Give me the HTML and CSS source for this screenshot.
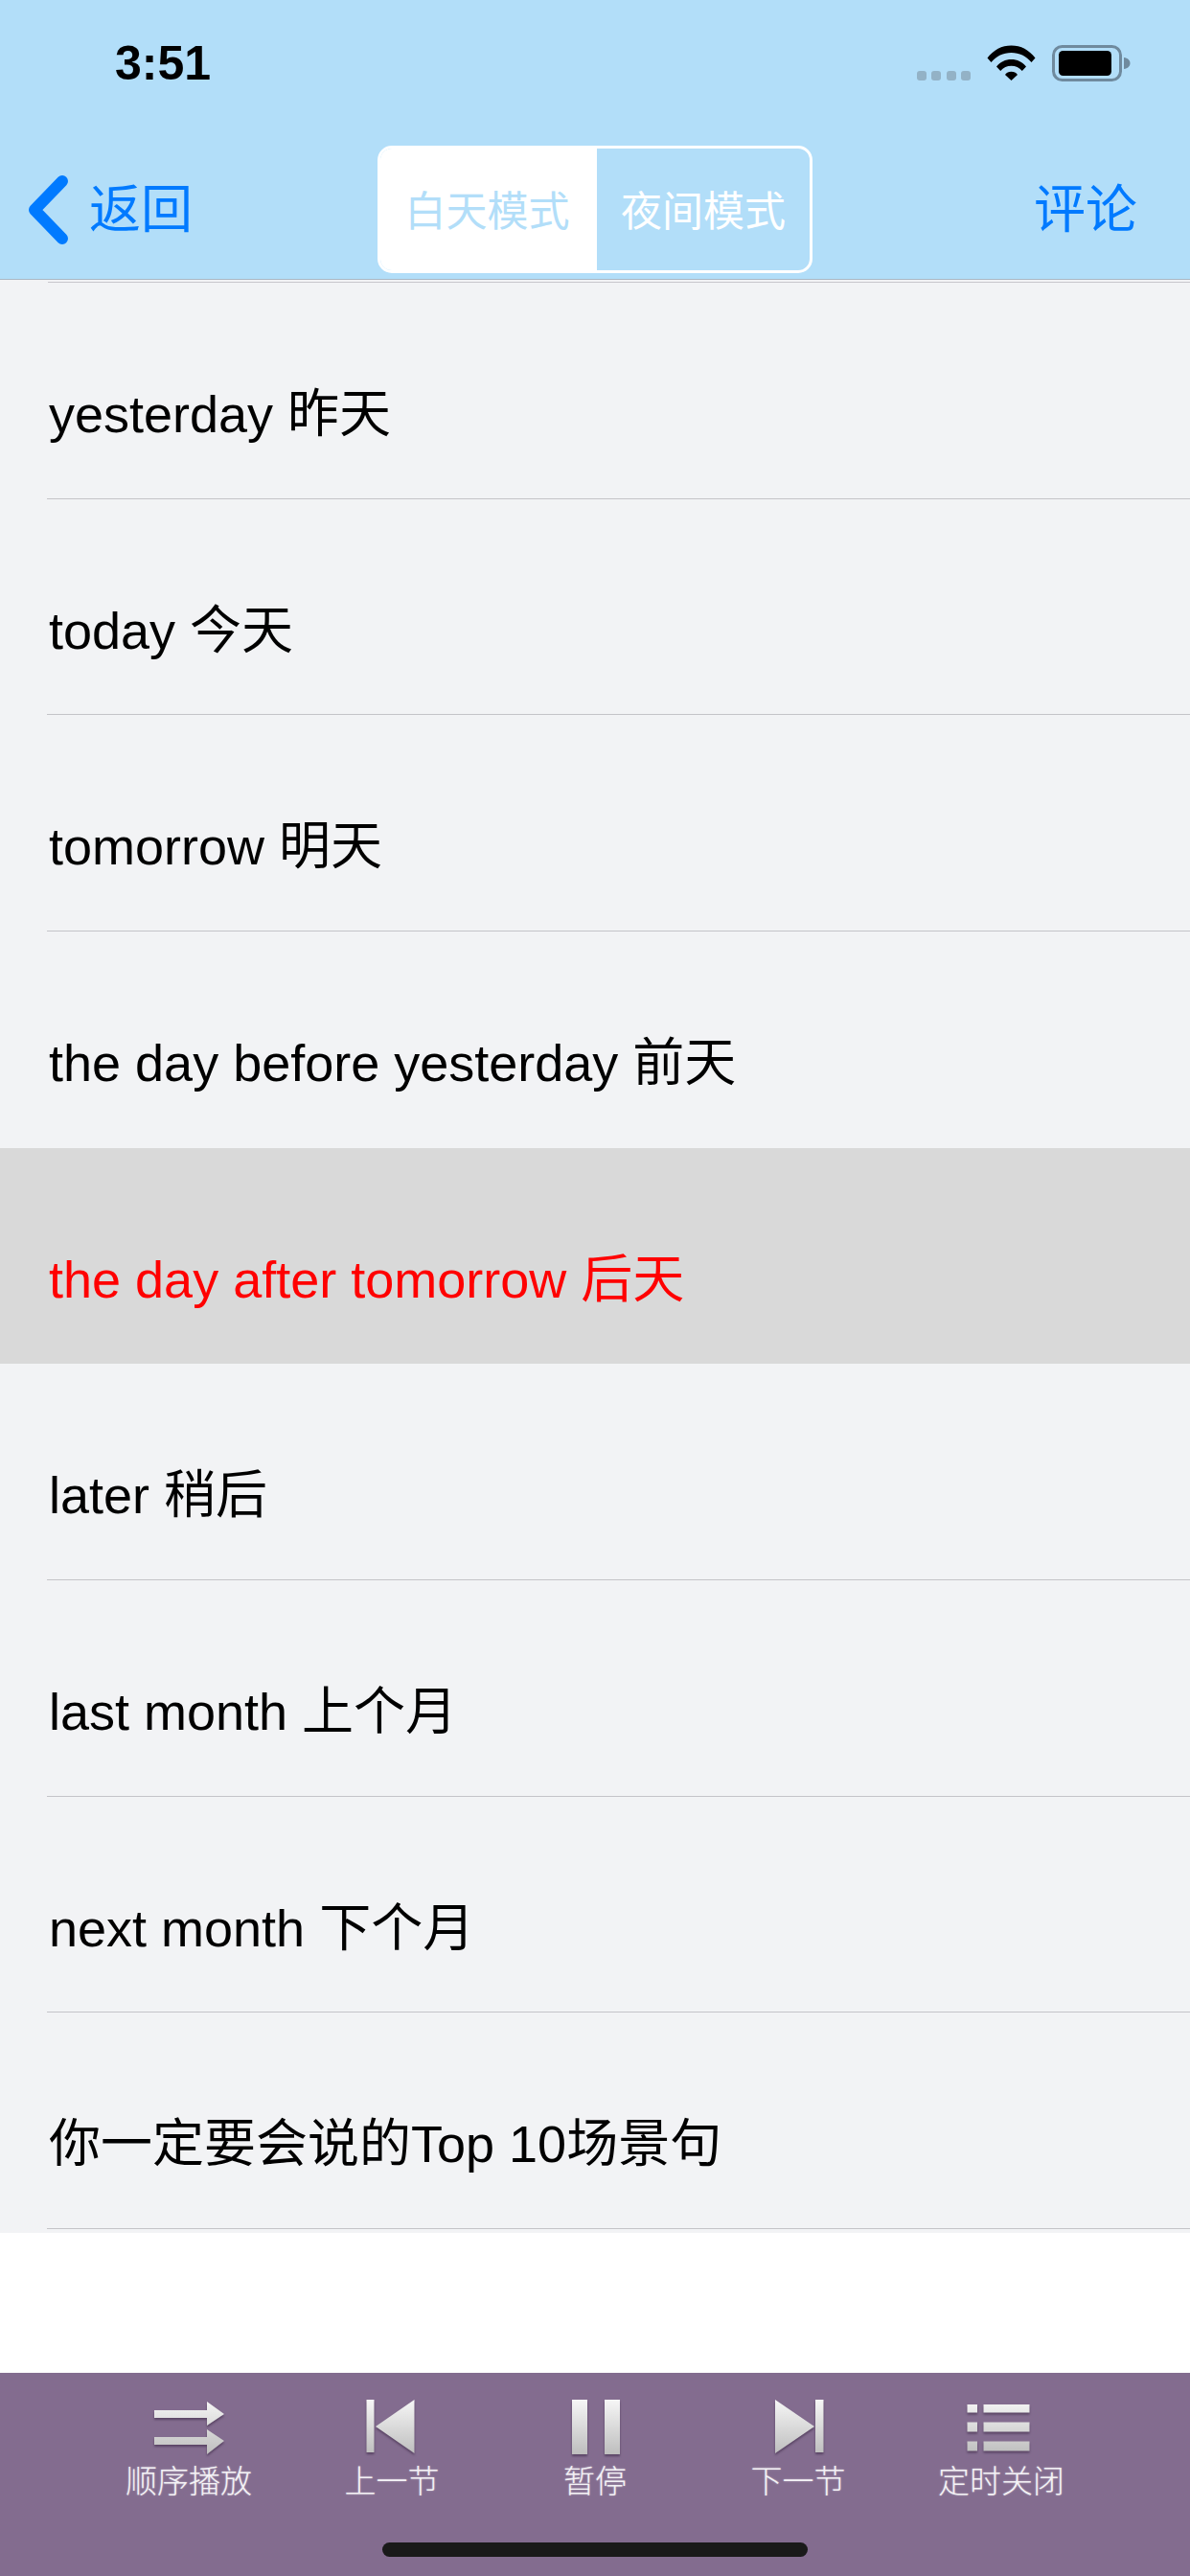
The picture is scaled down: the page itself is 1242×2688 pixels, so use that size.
FILE: index.html
```html
<!DOCTYPE html>
<html lang="zh-CN">
<head>
    <meta charset="UTF-8">
    <meta name="viewport" content="width=device-width, initial-scale=1.0">
    <title>yesterday 昨天</title>
    <link rel="stylesheet" href="styles.css">
</head>
<body>
    <div class="header">
        <div class="status-bar">
            <span class="time">3:51</span>
            <div class="status-icons">
                <div class="signal"><i></i><i></i><i></i><i></i></div>
                <svg class="wifi" width="51" height="37" viewBox="0 0 51 37">
                    <path d="M0.5 13.5C7 5 15.500 0.500 25.500 0.500S44 5 50.500 13.500L46.500 18C41 11.500 34 8 25.500 8S10 11.500 4.500 18Z"/>
                    <path d="M10 22.500C14 17.500 19.300 15 25.500 15S37 17.500 41 22.500L36.800 27C33.800 23.500 30 21.800 25.500 21.800S17.200 23.500 14.200 27Z"/>
                    <path d="M19 31C20.500 28.800 22.800 27.800 25.500 27.800S30.500 28.800 32 31L25.500 37Z"/>
                </svg>
                <svg class="battery" width="82" height="38" viewBox="0 0 82 38">
                    <rect x="1.500" y="1.500" width="70" height="35" rx="9" fill="none" stroke="#6f8a9e" stroke-width="3"/>
                    <rect x="7" y="6" width="55" height="26" rx="4.500" fill="#000"/>
                    <path d="M75 13C79 13.500 81.500 16 81.500 19S79 24.500 75 25Z" fill="#6f8a9e"/>
                </svg>
            </div>
        </div>
        <div class="nav-bar">
            <div class="nav-back">
                <svg width="42" height="72" viewBox="0 0 42 72">
                    <path d="M35 6L6 36L35 66" fill="none" stroke="#007aff" stroke-width="12" stroke-linecap="round" stroke-linejoin="round"/>
                </svg>
                <span>返回</span>
            </div>
            <div class="segment">
                <div class="segment-item active">白天模式</div>
                <div class="segment-item">夜间模式</div>
            </div>
            <div class="nav-action">评论</div>
        </div>
    </div>

    <div class="content">
        <ul class="list">
            <li class="list-item">yesterday 昨天</li>
            <li class="list-item">today 今天</li>
            <li class="list-item">tomorrow 明天</li>
            <li class="list-item no-line">the day before yesterday 前天</li>
            <li class="list-item playing">the day after tomorrow 后天</li>
            <li class="list-item">later 稍后</li>
            <li class="list-item">last month 上个月</li>
            <li class="list-item">next month 下个月</li>
            <li class="list-item">你一定要会说的Top 10场景句</li>
        </ul>
    </div>

    <div class="player">
        <div class="player-buttons">
            <div class="player-btn">
                <svg width="80" height="60" viewBox="0 0 80 60">
                    <defs>
                        <linearGradient id="metal" gradientUnits="userSpaceOnUse" x1="0" y1="2" x2="0" y2="60">
                            <stop offset="0" stop-color="#f6f6f6"/>
                            <stop offset="1" stop-color="#bdbdbd"/>
                        </linearGradient>
                    </defs>
                    <path d="M4 13H59V4L77 17L59 29V21H4Z" fill="url(#metal)"/>
                    <path d="M4 41H59V33L77 45L59 59V49H4Z" fill="url(#metal)"/>
                </svg>
                <span>顺序播放</span>
            </div>
            <div class="player-btn">
                <svg width="80" height="60" viewBox="0 0 80 60">
                    <path d="M13.500 2H21.500V57H13.500Z" fill="url(#metal)"/>
                    <path d="M63.500 2V58L23 30Z" fill="url(#metal)"/>
                </svg>
                <span>上一节</span>
            </div>
            <div class="player-btn">
                <svg width="80" height="60" viewBox="0 0 80 60">
                    <path d="M16 2H32V59H16Z" fill="url(#metal)"/>
                    <path d="M50 2H66V59H50Z" fill="url(#metal)"/>
                </svg>
                <span>暂停</span>
            </div>
            <div class="player-btn">
                <svg width="80" height="60" viewBox="0 0 80 60">
                    <path d="M16 2V58L57 30Z" fill="url(#metal)"/>
                    <path d="M58 2H66.500V57H58Z" fill="url(#metal)"/>
                </svg>
                <span>下一节</span>
            </div>
            <div class="player-btn">
                <svg width="80" height="60" viewBox="0 0 80 60">
                    <path d="M4.500 7H15V15.500H4.500ZM21.500 7H69.500V15.500H21.500Z" fill="url(#metal)"/>
                    <path d="M4.500 25.500H15V35.500H4.500ZM21.500 25.500H69.500V35.500H21.500Z" fill="url(#metal)"/>
                    <path d="M4.500 45.500H15V55.500H4.500ZM21.500 45.500H69.500V55.500H21.500Z" fill="url(#metal)"/>
                </svg>
                <span>定时关闭</span>
            </div>
        </div>
        <div class="home-bar"></div>
    </div>
</body>
</html>
```

FILE: styles.css
```css
* {
    margin: 0;
    padding: 0;
    box-sizing: border-box;
}

html, body {
    width: 1242px;
    height: 2688px;
    overflow: hidden;
}

body {
    display: flex;
    flex-direction: column;
    background: white;
    font-family: "Liberation Sans", "Noto Sans CJK SC", sans-serif;
    color: black;
}

.header {
    height: 292px;
    background: #b2def9;
    border-bottom: 1px solid #a9b7c4;
}

.status-bar {
    height: 132px;
    padding: 36px 62px 0 120px;
    display: flex;
    justify-content: space-between;
    align-items: flex-start;
}

.time {
    font-size: 50px;
    font-weight: 700;
    line-height: 60px;
}

.status-icons {
    display: flex;
    align-items: flex-start;
    padding-top: 11px;
}

.signal {
    display: flex;
    gap: 5.330px;
    margin-top: 27px;
    margin-right: 17px;
}

.signal i {
    display: block;
    width: 10px;
    height: 10px;
    border-radius: 3px;
    background: #93b2c6;
}

.wifi {
    fill: black;
    margin-right: 17px;
}

.nav-bar {
    display: grid;
    grid-template-columns: 1fr 454px 1fr;
    align-items: flex-start;
    padding: 20px 0 0;
}

.nav-back {
    display: flex;
    align-items: center;
    gap: 21px;
    padding: 31px 0 0 30px;
    color: #007aff;
    font-size: 54px;
    line-height: 72px;
}

.segment {
    display: flex;
    height: 133px;
    border: 3px solid white;
    border-radius: 15px;
    overflow: hidden;
}

.segment-item {
    flex: 1;
    display: flex;
    align-items: center;
    justify-content: center;
    padding-bottom: 4px;
    font-size: 43px;
    color: white;
}

.segment-item.active {
    flex: 0 0 226px;
    padding-right: 3px;
    background: white;
    color: #b2def9;
}

.nav-action {
    justify-self: end;
    padding: 31px 55px 0 0;
    color: #007aff;
    font-size: 54px;
    line-height: 72px;
}

.content {
    flex: 1;
}

.list {
    list-style: none;
    background: #f2f3f5;
    padding-bottom: 4px;
}

.list::before {
    content: "";
    display: block;
    height: 2px;
    margin-left: 50px;
    border-bottom: 1px solid #c8c7cc;
}

.list-item {
    height: 225.670px;
    padding: 107px 0 0 51px;
    font-size: 54px;
    line-height: 60px;
    border-bottom: 1px solid transparent;
    border-image: linear-gradient(to right, transparent 50px, #c4c4c8 50px) 1;
    white-space: nowrap;
}

.list-item.no-line {
    border-image: none;
}

.list-item.playing {
    background: #d9d9d9;
    color: #ff0000;
    border-image: none;
}

.player {
    height: 212px;
    background: #836c8f;
    padding-top: 26px;
}

.player-buttons {
    display: grid;
    grid-template-columns: repeat(5, 212px);
    justify-content: center;
}

.player-btn {
    display: flex;
    flex-direction: column;
    align-items: center;
    color: #f4f2f6;
    font-size: 33px;
    line-height: 40px;
    font-weight: 300;
    text-shadow: 0 0 2px rgba(255,255,255,0.5);
}

.player-btn svg {
    display: block;
    filter: drop-shadow(0 2px 1px rgba(60,40,70,0.6)) blur(0.4px);
}

.player-btn span {
    margin-top: 8px;
}

.home-bar {
    width: 444px;
    height: 15px;
    margin: 43px auto 0;
    background: #1a1a1a;
    border-radius: 8px;
}
```
